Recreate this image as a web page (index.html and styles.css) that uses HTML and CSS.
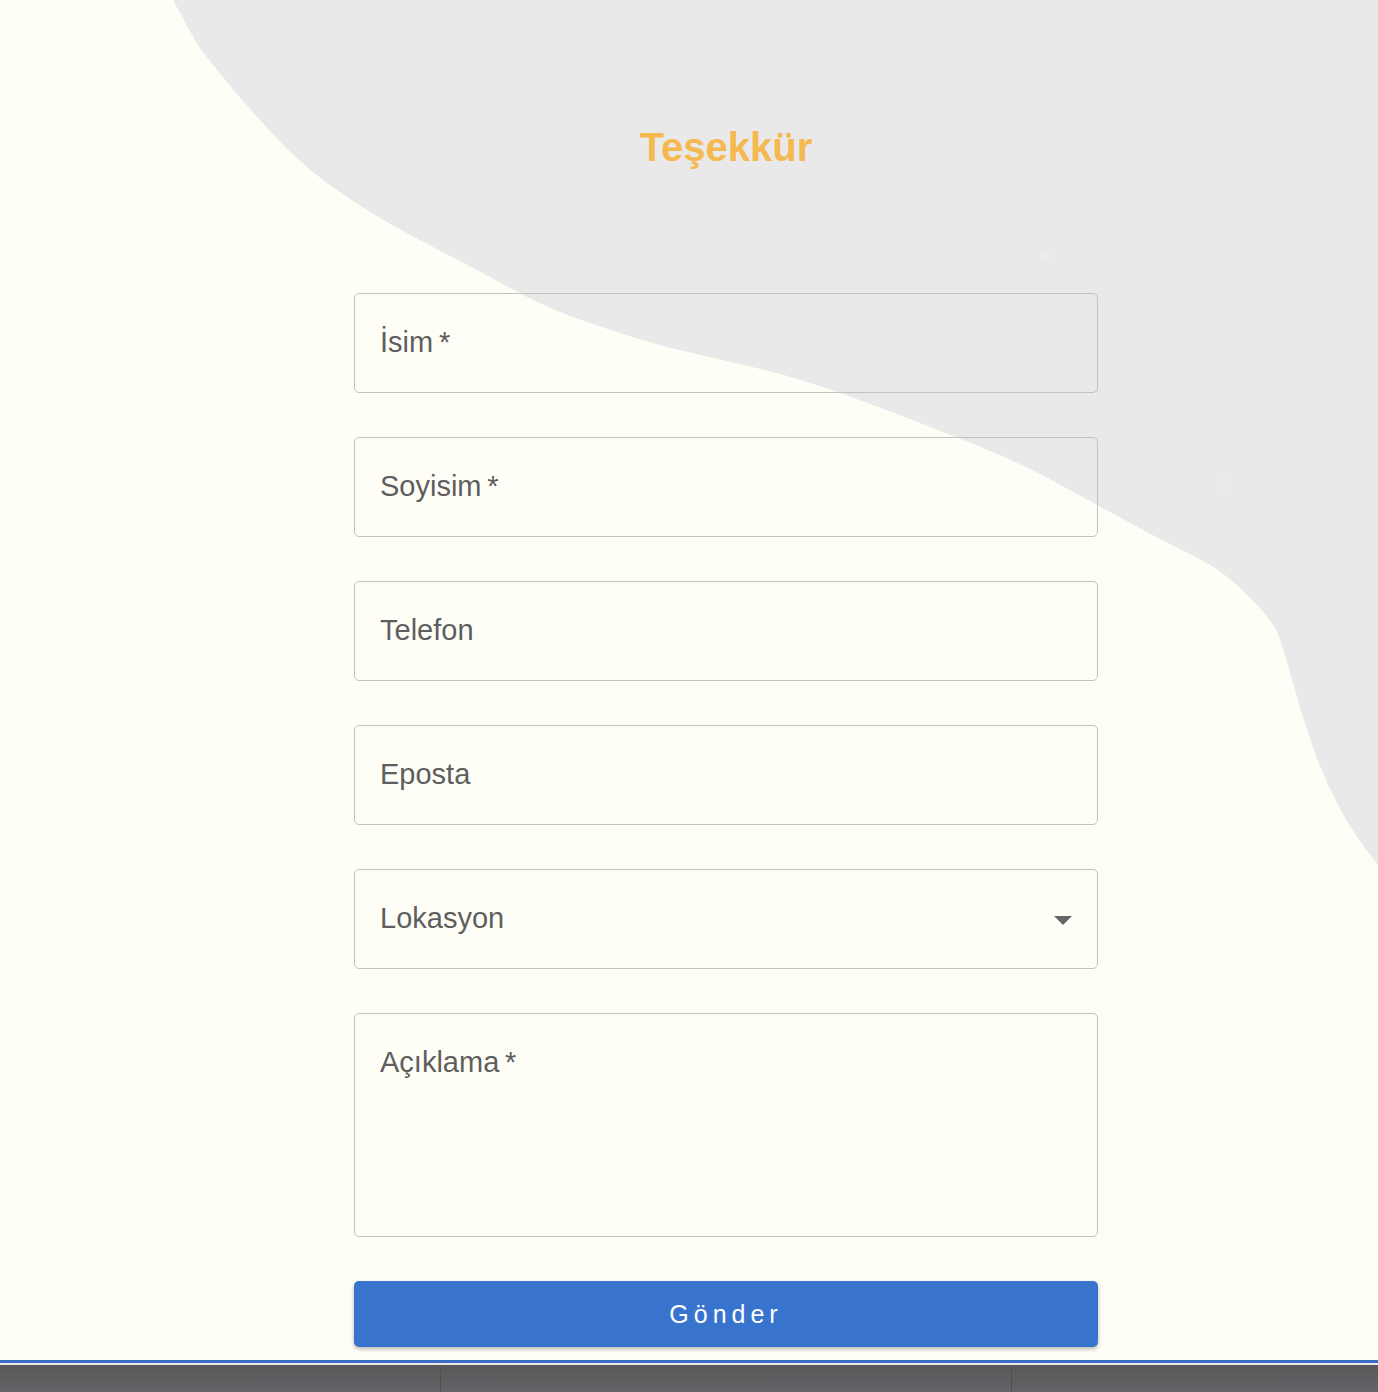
FILE: index.html
```html
<!DOCTYPE html>
<html lang="tr">
<head>
<meta charset="utf-8">
<title>Teşekkür</title>
<link rel="stylesheet" href="styles.css">
</head>
<body>
<svg class="blob" width="1378" height="870" viewBox="0 0 1378 870" aria-hidden="true">
  <path d="M173,0 L1378,0 L1378,865 Q1353,834 1338,805 Q1323,776 1312,744.5 Q1301,713 1292,679.5 Q1283,646 1277.5,633 Q1272,620 1248,595.5 Q1224,571 1196.5,557.5 Q1169,544 1132,524 Q1095,504 1058,483.5 Q1021,463 966,441 Q911,419 855.5,398.5 Q800,378 750,366.5 Q700,355 675,349 Q650,343 600,326.5 Q550,310 516.5,291.5 Q483,273 441.5,251.5 Q400,230 375,215 Q350,200 325,181.5 Q300,163 275,136.5 Q250,110 226.5,81.5 Q203,53 196.5,43 L173,0 Z" fill="#EAE9EA"/>
  <circle cx="1045" cy="256" r="4" fill="#EFEEEE"/>
  <circle cx="1225" cy="485" r="8" fill="#ECEBEB"/>
</svg>
<main class="page">
  <h1 class="title">Teşekkür</h1>
  <form class="form">
    <div class="field"><span class="label">İsim&thinsp;*</span></div>
    <div class="field"><span class="label">Soyisim&thinsp;*</span></div>
    <div class="field"><span class="label">Telefon</span></div>
    <div class="field"><span class="label">Eposta</span></div>
    <div class="field select"><span class="label">Lokasyon</span><span class="caret"></span></div>
    <div class="field area"><span class="label">Açıklama&thinsp;*</span></div>
    <button type="button" class="submit">Gönder</button>
  </form>
</main>
<footer class="footer">
  <div class="footer-line"></div>
  <div class="footer-bar">
    <div class="cell cell-a"></div>
    <div class="cell cell-b"></div>
    <div class="cell cell-c"></div>
  </div>
</footer>
</body>
</html>
```
FILE: styles.css
```css
html, body {
  margin: 0;
  padding: 0;
}
body {
  background: #FEFEF7;
  font-family: "Liberation Sans", Arial, sans-serif;
  position: relative;
  width: 1378px;
  height: 1392px;
  overflow: hidden;
}
.blob {
  position: absolute;
  top: 0;
  left: 0;
  z-index: 0;
}
.page {
  position: relative;
  z-index: 1;
  width: 744px;
  margin-left: 354px;
  padding-top: 123px;
}
.title {
  margin: 0;
  text-align: center;
  font-size: 40px;
  line-height: 48px;
  font-weight: 700;
  color: #F4B94F;
}
.form {
  margin-top: 122px;
  display: flex;
  flex-direction: column;
  gap: 44px;
}
.field {
  box-sizing: border-box;
  height: 100px;
  border: 1px solid #C2C2C2;
  border-radius: 5px;
  padding: 0 25px;
  display: flex;
  align-items: center;
  justify-content: space-between;
}
.label {
  font-size: 29px;
  line-height: 32px;
  color: #5E5E5E;
  margin-top: -2px;
}
.field.area {
  height: 224px;
  align-items: flex-start;
  padding-top: 34px;
}
.caret {
  width: 0;
  height: 0;
  border-left: 9px solid transparent;
  border-right: 9px solid transparent;
  border-top: 9px solid #666;
  margin-top: 2px;
}
.submit {
  height: 66px;
  border: none;
  border-radius: 5px;
  background: #3874CD;
  color: #fff;
  font-family: "Liberation Sans", Arial, sans-serif;
  font-size: 25px;
  letter-spacing: 5px;
  box-shadow: 0 2px 4px rgba(0, 0, 0, 0.28);
  padding: 0;
}
.footer {
  position: absolute;
  left: 0;
  right: 0;
  top: 1360px;
  z-index: 1;
}
.footer-line {
  height: 3px;
  background: #3B6CC7;
  border-bottom: 2px solid #E8E8EA;
}
.footer-bar {
  display: flex;
  height: 27px;
  background: linear-gradient(#58585A, #646367);
}
.cell-a {
  width: 440px;
  border-right: 1px solid #5E4A40;
}
.cell-b {
  width: 570px;
  border-right: 1px solid #5E4A40;
}
.cell-c {
  flex: 1;
}
```
